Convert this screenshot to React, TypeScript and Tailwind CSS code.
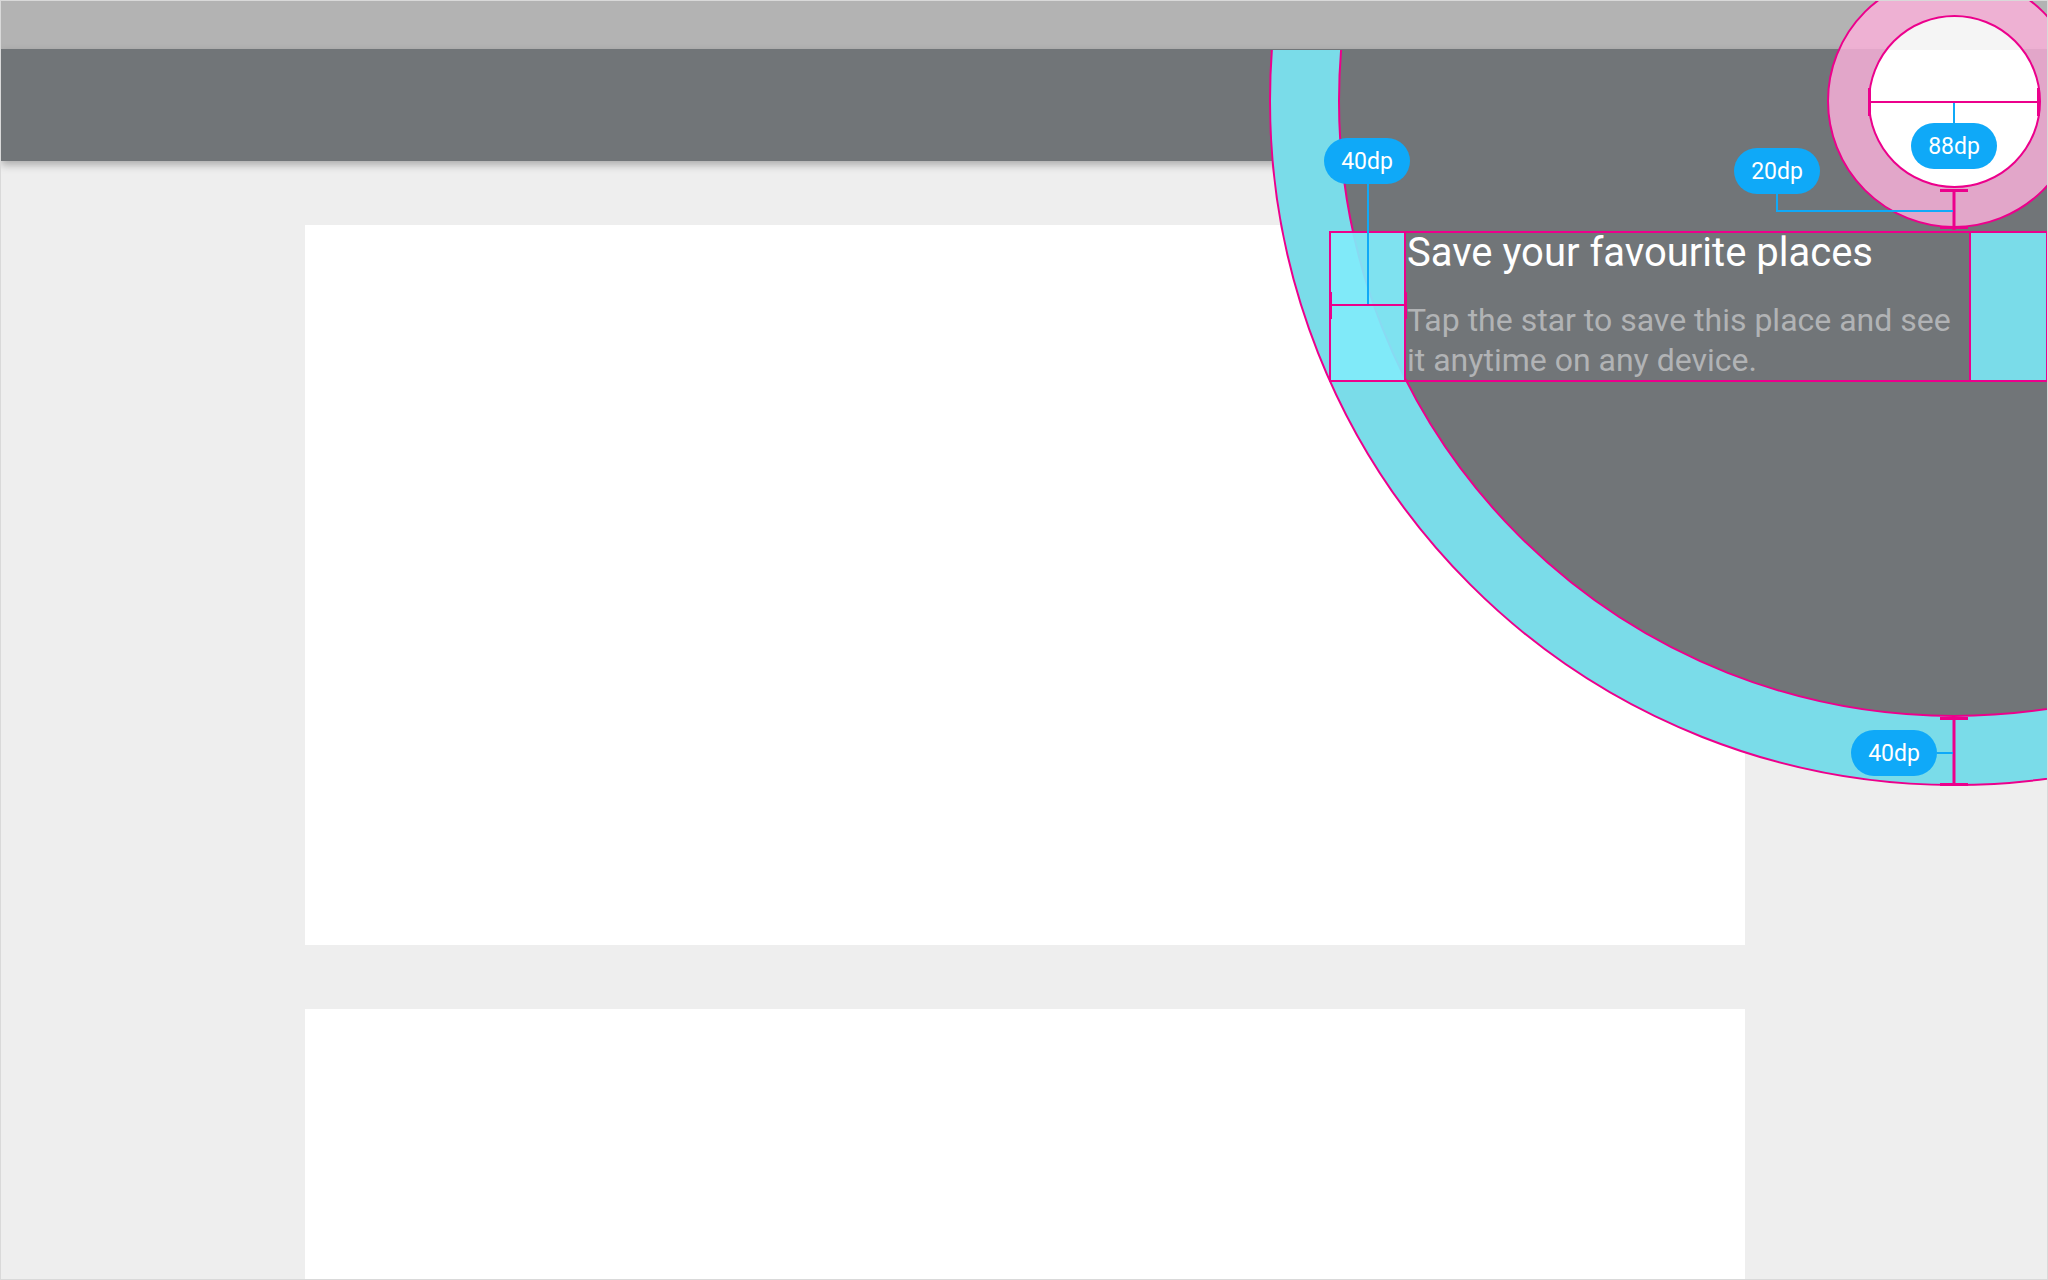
import React from "react";

const PINK = "#ec008c";
const BLUE = "#0fa9f8";

function Pill({ x, y, label }: { x: number; y: number; label: string }) {
  return (
    <div
      className="absolute flex h-[46px] w-[86px] items-center justify-center rounded-full bg-[#0fa9f8] text-[23px] leading-none text-white"
      style={{ left: x - 43, top: y - 23, fontFamily: "Roboto, 'Liberation Sans', sans-serif" }}
    >
      {label}
    </div>
  );
}

export default function App() {
  return (
    <div
      className="relative h-[1280px] w-[2048px] overflow-hidden border border-[#d9d9d9] bg-[#eeeeee]"
      style={{ fontFamily: "Roboto, 'Liberation Sans', sans-serif" }}
    >
      {/* status bar */}
      <div className="h-[48px] bg-[#b3b3b3]" />
      {/* toolbar */}
      <div className="relative z-10 h-[112px] bg-[#717578] shadow-[0_4px_8px_rgba(0,0,0,0.28)]" />
      {/* content */}
      <div className="flex flex-col gap-[64px] pl-[304px] pt-[64px]">
        <div className="h-[720px] w-[1440px] bg-white" />
        <div className="h-[400px] w-[1440px] bg-white" />
      </div>

      {/* feature discovery circle clipped below the status bar */}
      <div className="absolute bottom-0 left-0 right-0 top-[49px] z-20 overflow-hidden">
        <div className="absolute left-[1268px] top-[-634px] h-[1370px] w-[1370px] rounded-full border-2 border-[#ec008c] bg-[#7adce9]" />
        <div className="absolute left-[1337px] top-[-565px] h-[1232px] w-[1232px] rounded-full border-2 border-[#ec008c] bg-[#717578]" />
      </div>

      {/* text box */}
      <div className="absolute left-[1328px] top-[230px] z-30 flex h-[151px] w-[719px] border-2 border-[#ec008c]">
        <div className="w-[75px] border-r-2 border-[#ec008c] bg-[rgba(128,235,250,0.93)]" />
        <div className="flex-1 pl-[1px]">
          <div className="text-[40px] leading-[40px] text-white">Save your favourite places</div>
          <div className="mt-[27px] text-[32px] leading-[40px] text-[#b1b3b5]">
            Tap the star to save this place and see it anytime on any device.
          </div>
        </div>
        <div className="w-[77px] border-l-2 border-[#ec008c] bg-[#7adce9]" />
      </div>

      {/* tap target */}
      <div className="absolute left-[1826px] top-[-27px] z-30 h-[254px] w-[254px] rounded-full border-2 border-[#ec008c] bg-[rgba(251,177,218,0.82)]" />
      <div className="absolute left-[1867px] top-[14px] z-30 h-[173px] w-[173px] rounded-full border-2 border-[#ec008c] bg-[linear-gradient(to_bottom,#f5f5f5_33px,#ffffff_33px)]" />

      {/* annotations */}
      <svg className="pointer-events-none absolute left-0 top-0 z-40" width={2048} height={1280}>
        {/* 40dp left */}
        <line x1={1330} y1={304} x2={1405} y2={304} stroke={PINK} strokeWidth={2} />
        <rect x={1328} y={291} width={3} height={27} fill={PINK} />
        <rect x={1403} y={291} width={3} height={27} fill={PINK} />
        <line x1={1367} y1={183} x2={1367} y2={303} stroke={BLUE} strokeWidth={2} />
        {/* 88dp */}
        <line x1={1868} y1={101} x2={2039} y2={101} stroke={PINK} strokeWidth={2} />
        <rect x={1867} y={87} width={3} height={28} fill={PINK} />
        <rect x={2036} y={87} width={3} height={28} fill={PINK} />
        <line x1={1953} y1={102} x2={1953} y2={122} stroke={BLUE} strokeWidth={2} />
        {/* 20dp */}
        <line x1={1953} y1={189} x2={1953} y2={229} stroke={PINK} strokeWidth={3} />
        <rect x={1939} y={188} width={28} height={3} fill={PINK} />
        <rect x={1939} y={225} width={28} height={3} fill={PINK} />
        <polyline points="1776,193 1776,210 1952,210" fill="none" stroke={BLUE} strokeWidth={2} />
        {/* 40dp bottom */}
        <line x1={1953} y1={716} x2={1953} y2={784} stroke={PINK} strokeWidth={3} />
        <rect x={1939} y={716} width={28} height={3} fill={PINK} />
        <rect x={1939} y={782} width={28} height={3} fill={PINK} />
        <line x1={1936} y1={752} x2={1952} y2={752} stroke={BLUE} strokeWidth={2} />
      </svg>

      <div className="absolute inset-0 z-50">
        <Pill x={1366} y={160} label="40dp" />
        <Pill x={1776} y={170} label="20dp" />
        <Pill x={1953} y={145} label="88dp" />
        <Pill x={1893} y={752} label="40dp" />
      </div>
    </div>
  );
}
